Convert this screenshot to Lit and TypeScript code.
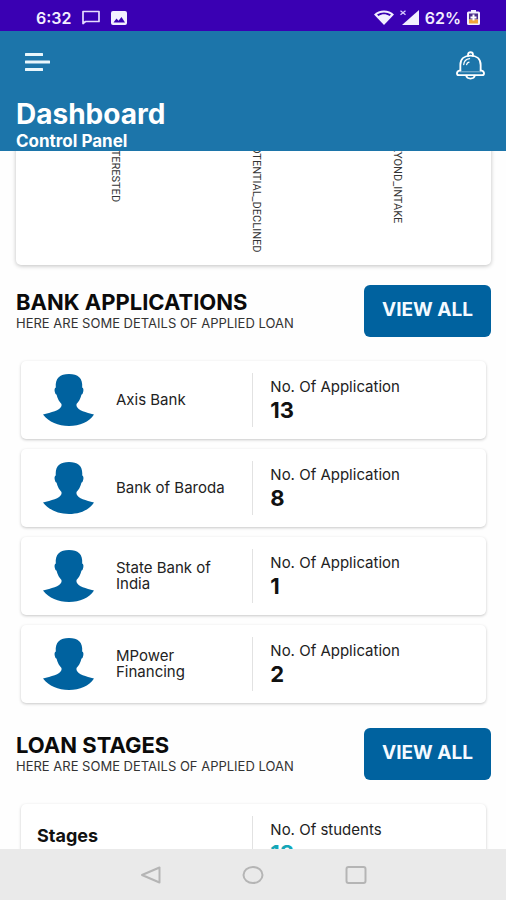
import { LitElement, html, css, svg } from "lit";
import { customElement, property } from "lit/decorators.js";

interface Bank {
  name: string;
  applications: number;
}

const BANKS: Bank[] = [
  { name: "Axis Bank", applications: 13 },
  { name: "Bank of Baroda", applications: 8 },
  { name: "State Bank of India", applications: 1 },
  { name: "MPower Financing", applications: 2 },
];

const CHART_LABELS = ["INTERESTED", "POTENTIAL_DECLINED", "BEYOND_INTAKE"];

const person = svg`
  <path d="M26 0C17 0 12 4 12.800 13.500C11.300 14 11.300 16.500 12 18.500C12.300 20 13 20.500 13.500 20.500C14.500 25 16.500 28 18.500 30V32C17 36.500 8 38.500 0 40.500C6 48 15 52 26 52C37 52 46 48 51 40.500C43 38.500 35 36.500 33.500 32V30C35.500 28 37.500 25 38.500 20.500C39 20.500 39.700 20 40 18.500C40.700 16.500 40.700 14 39.200 13.500C40 4 35 0 26 0Z" fill="#00629f"/>`;

@customElement("status-bar")
export class StatusBar extends LitElement {
  static styles = css`
    :host {
      display: flex;
      align-items: center;
      justify-content: space-between;
      height: 31px;
      padding: 4px 26px 0 36px;
      box-sizing: border-box;
      background: #3a00b3;
      color: #f3efff;
      font-size: 16px;
      font-weight: 600;
    }
    .group {
      display: flex;
      align-items: center;
    }
    .left {
      gap: 11px;
    }
    .right {
      gap: 6px;
    }
    svg {
      display: block;
    }
  `;

  render() {
    return html`
      <div class="group left">
        <span>6:32</span>
        <svg width="18" height="15" viewBox="0 0 18 15" fill="none" stroke="#e6dcff" stroke-width="1.7">
          <path d="M1 13.500V1.500H17V11.500H3.500Z" stroke-linejoin="round" />
        </svg>
        <svg width="16" height="14" viewBox="0 0 16 14">
          <rect width="16" height="14" rx="2" fill="#f3efff" />
          <path d="M2.500 11.500L5.500 7.500L7.500 9.800L10.500 6L14 11.500Z" fill="#3a00b3" />
        </svg>
      </div>
      <div class="group right">
        <svg width="20" height="15" viewBox="0 0 20 15">
          <path d="M0 4.500C5 -0.800 15 -0.800 20 4.500L10 15Z" fill="#f3efff" />
          <path d="M3 4.600C7 1.700 13 1.700 17 4.600L15.500 6C12 3.800 8 3.800 4.500 6Z" fill="#3a00b3" />
        </svg>
        <svg width="19" height="15" viewBox="0 0 19 15">
          <path d="M19 0V15H2Z" fill="#f3efff" />
          <path d="M0.500 0.800L5.500 4.800M5.500 0.800L0.500 4.800" stroke="#d8ccff" stroke-width="1.3" />
        </svg>
        <span>62%</span>
        <svg width="13" height="15" viewBox="0 0 13 15">
          <path d="M4 0H9V1.500H11.500Q13 1.500 13 3V13.500Q13 15 11.500 15H1.500Q0 15 0 13.500V3Q0 1.500 1.500 1.500H4Z" fill="#f3efff" />
          <rect x="2" y="3.500" width="9" height="6" fill="#4a2b8a" />
          <rect x="2" y="9.500" width="9" height="4" fill="#f0a53a" />
          <path d="M6.500 4.500V10.500M3.500 7.500H9.500" stroke="#fff" stroke-width="2" />
        </svg>
      </div>
    `;
  }
}

@customElement("app-header")
export class AppHeader extends LitElement {
  static styles = css`
    :host {
      display: block;
      height: 120px;
      box-sizing: border-box;
      padding: 19px 16px 0;
      background: #1c75aa;
      color: #fff;
    }
    .bar {
      display: flex;
      justify-content: space-between;
      align-items: flex-start;
      height: 48px;
    }
    .icon {
      border: 0;
      background: none;
      padding: 0;
    }
    .menu {
      padding: 3px 8px;
    }
    .bell {
      padding: 1px 5px;
    }
    svg {
      display: block;
    }
    h1,
    p {
      margin: 0;
      font-weight: 700;
    }
    h1 {
      font-size: 28px;
      line-height: 32px;
    }
    p {
      font-size: 17px;
      line-height: 22px;
    }
  `;

  render() {
    return html`
      <div class="bar">
        <button class="icon menu" aria-label="Menu">
          <svg width="26" height="19" viewBox="0 0 26 19" fill="#e8f6fc">
            <rect x="1" width="18" height="3" rx="0.500" />
            <rect x="1" y="7.500" width="25" height="3" rx="0.500" />
            <rect x="1" y="15" width="18" height="3" rx="0.500" />
          </svg>
        </button>
        <button class="icon bell" aria-label="Notifications">
          <svg width="29" height="29" viewBox="0 0 30 30" fill="none" stroke="#fff" stroke-width="1.900" stroke-linecap="round" stroke-linejoin="round">
            <path d="M12.500 5V3.500C12.500 0.500 17.500 0.500 17.500 3.500V5" />
            <path d="M4.500 20V14.500C4.500 8 9 4.800 15 4.800S25.500 8 25.500 14.500V20" />
            <path d="M4.500 20C2 20.500 1 21.500 1 23C1 24.500 1.800 25 3 25H27C28.200 25 29 24.500 29 23C29 21.500 28 20.500 25.500 20" />
            <path d="M4.500 21.500H25.500" stroke-width="1" opacity="0.500" />
            <path d="M10.500 25.500C11.500 29.500 18.500 29.500 19.500 25.500" />
            <path d="M8 14C8.300 10.500 10.500 8.500 14 8M11 14C11.300 12.500 12 12 13.500 11.500" stroke-width="1.300" />
          </svg>
        </button>
      </div>
      <h1>Dashboard</h1>
      <p>Control Panel</p>
    `;
  }
}

@customElement("section-head")
export class SectionHead extends LitElement {
  @property() heading = "";
  @property() note = "";

  static styles = css`
    :host {
      display: flex;
      justify-content: space-between;
      align-items: center;
    }
    h2,
    p {
      margin: 0;
    }
    h2 {
      font-size: 22px;
      line-height: 24px;
      font-weight: 700;
      color: #0b0b0b;
    }
    p {
      font-size: 13px;
      line-height: 18px;
      color: #333;
      white-space: nowrap;
    }
    button {
      width: 127px;
      height: 52px;
      flex: none;
      border: 0;
      border-radius: 6px;
      padding: 0 0 4px;
      background: #00629f;
      color: #f4faff;
      font: inherit;
      font-size: 19px;
      font-weight: 700;
    }
  `;

  render() {
    return html`
      <div>
        <h2>${this.heading}</h2>
        <p>${this.note}</p>
      </div>
      <button>VIEW ALL</button>
    `;
  }
}

@customElement("nav-bar")
export class NavBar extends LitElement {
  static styles = css`
    :host {
      display: flex;
      justify-content: center;
      gap: 81px;
      height: 51px;
      align-items: center;
      background: #eaeaea;
    }
    button {
      border: 0;
      background: none;
      padding: 0;
    }
    svg {
      display: block;
    }
  `;

  render() {
    return html`
      <button aria-label="Back">
        <svg width="22" height="20" viewBox="0 0 22 20" fill="none" stroke="#b5b5b5" stroke-width="2" stroke-linejoin="round">
          <path d="M3 10L20.500 2.500V17.500Z" />
        </svg>
      </button>
      <button aria-label="Home">
        <svg width="22" height="20" viewBox="0 0 22 20" fill="none" stroke="#b5b5b5" stroke-width="2">
          <ellipse cx="11" cy="10" rx="9.500" ry="8" />
        </svg>
      </button>
      <button aria-label="Recent apps">
        <svg width="22" height="20" viewBox="0 0 22 20" fill="none" stroke="#b5b5b5" stroke-width="2">
          <rect x="1.500" y="2" width="19" height="16" rx="2" />
        </svg>
      </button>
    `;
  }
}

@customElement("app-root")
export class AppRoot extends LitElement {
  static styles = css`
    :host {
      display: flex;
      flex-direction: column;
      height: 100vh;
      background: #fefefe;
      color: #222;
      font-family: Inter, Roboto, sans-serif;
    }
    main {
      flex: 1;
      min-height: 0;
      overflow: hidden;
    }
    /* The list is scrolled so that the chart's axis line sits under the header. */
    .content {
      margin-top: -12px;
      padding: 0 15px 0 16px;
    }
    .chart {
      display: grid;
      grid-template-columns: repeat(3, 1fr);
      height: 126px;
      margin-bottom: 20px;
      padding: 0 24px 0 28px;
      box-sizing: border-box;
      border-radius: 0 0 5px 5px;
      background: #fff;
      box-shadow: 0 1px 4px rgba(0, 0, 0, 0.25);
    }
    .label {
      justify-self: center;
      writing-mode: vertical-rl;
      font-family: Roboto, sans-serif;
      font-size: 11px;
      line-height: 12px;
      color: #333;
    }
    .cards {
      display: grid;
      gap: 10px;
      margin: 0;
      padding: 24px 5px 25px;
      list-style: none;
    }
    .card {
      display: grid;
      grid-template-columns: 99fr 100fr;
      align-items: center;
      height: 78px;
      border-radius: 5px;
      background: #fff;
      box-shadow: 0 1px 3px rgba(0, 0, 0, 0.22);
      font-size: 15px;
    }
    .who {
      display: grid;
      grid-template-columns: 51px 1fr;
      gap: 22px;
      align-items: center;
      padding: 0 22px;
      line-height: 16px;
    }
    .name {
      max-width: 112px;
    }
    .count {
      display: flex;
      flex-direction: column;
      justify-content: center;
      height: 54px;
      padding-left: 17px;
      border-left: 1px solid #e2e2e2;
      line-height: 20px;
    }
    .value {
      font-size: 22px;
      line-height: 26px;
      font-weight: 700;
      color: #111;
    }
    .tall {
      height: 88px;
      align-items: start;
      padding-top: 12px;
      box-sizing: border-box;
    }
    .tall .count {
      height: 76px;
      justify-content: flex-start;
      padding-top: 4px;
      box-sizing: border-box;
    }
    .teal {
      color: #14a7b8;
    }
    .stages {
      padding: 8px 16px;
      margin: 0;
      font-size: 18px;
      line-height: 24px;
      font-weight: 700;
      color: #111;
    }
    .person {
      display: block;
    }
  `;

  render() {
    return html`
      <status-bar></status-bar>
      <app-header></app-header>
      <main>
        <div class="content">
          <div class="chart">
            ${CHART_LABELS.map((text) => html`<span class="label">${text}</span>`)}
          </div>
          <section-head
            heading="BANK APPLICATIONS"
            note="HERE ARE SOME DETAILS OF APPLIED LOAN"
          ></section-head>
          <ul class="cards">
            ${BANKS.map(
              (bank) => html`
                <li class="card">
                  <div class="who">
                    <svg class="person" width="51" height="52" viewBox="0 0 51 52">${person}</svg>
                    <span class="name">${bank.name}</span>
                  </div>
                  <div class="count">
                    <span>No. Of Application</span>
                    <span class="value">${bank.applications}</span>
                  </div>
                </li>
              `
            )}
          </ul>
          <section-head
            heading="LOAN STAGES"
            note="HERE ARE SOME DETAILS OF APPLIED LOAN"
          ></section-head>
          <div class="cards">
            <div class="card tall">
              <h3 class="stages">Stages</h3>
              <div class="count">
                <span>No. Of students</span>
                <span class="value teal">18</span>
              </div>
            </div>
          </div>
        </div>
      </main>
      <nav-bar></nav-bar>
    `;
  }
}
